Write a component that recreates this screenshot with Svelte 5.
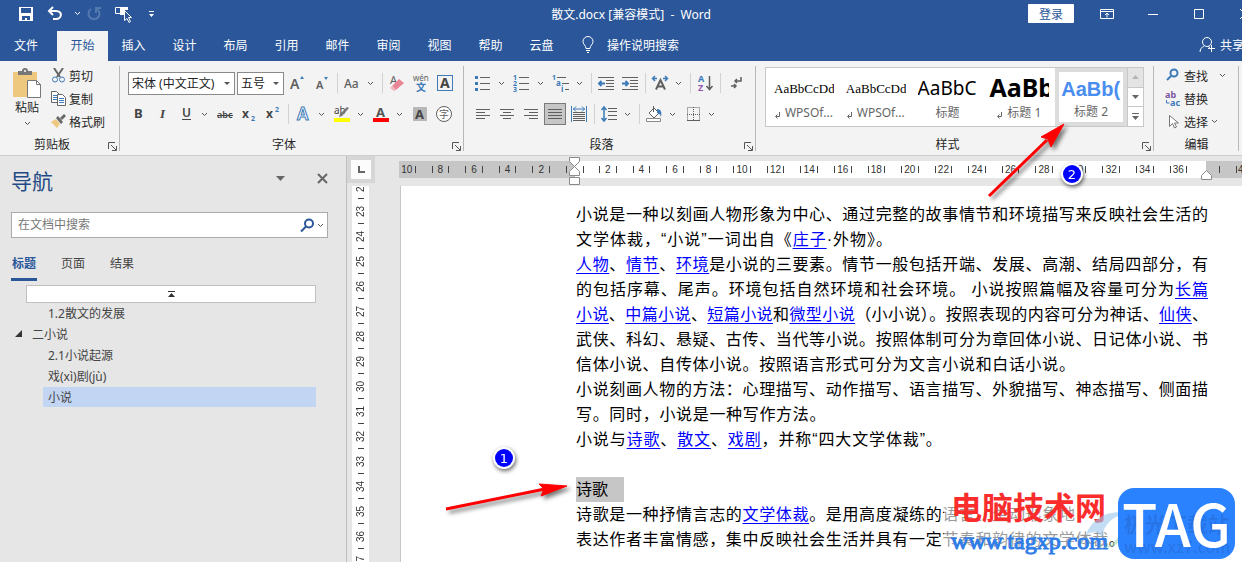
<script lang="ts">
  const BLUE = '#3d7ab8';
  const GRAY = '#5f5f5f';
  const CELLS_PER_LINE = 38;

  const tabs = ['文件', '开始', '插入', '设计', '布局', '引用', '邮件', '审阅', '视图', '帮助', '云盘'];
  let activeTab = $state('开始');

  const navTabs = ['标题', '页面', '结果'];
  let activeNavTab = $state('标题');

  const headings = [
    { text: '1.2散文的发展', level: 2 },
    { text: '二小说', level: 1, open: true },
    { text: '2.1小说起源', level: 2 },
    { text: '戏(xì)剧(jù)', level: 2 },
    { text: '小说', level: 2 },
  ];
  let selected = $state(4);

  const styles = [
    { sample: 'AaBbCcDd', name: 'WPSOf...', kind: 'body', linked: true },
    { sample: 'AaBbCcDd', name: 'WPSOf...', kind: 'body', linked: true },
    { sample: 'AaBbC', name: '标题', kind: 'title' },
    { sample: 'AaBb', name: '标题 1', kind: 'h1', linked: true },
    { sample: 'AaBb(', name: '标题 2', kind: 'h2' },
  ];

  const leftMarks = [10, 8, 6, 4, 2];
  const marks = Array.from({ length: 18 }, (_, i) => (i + 1) * 2);
  const vMarks = Array.from({ length: 16 }, (_, i) => i + 22);

  // [..] marks a hyperlink, cells is the length of the line on the character grid
  const lines = [
    { text: '小说是一种以刻画人物形象为中心、通过完整的故事情节和环境描写来反映社会生活的', cells: 38 },
    { text: '文学体裁，“小说”一词出自《[庄子]·外物》。', cells: 19 },
    { text: '[人物]、[情节]、[环境]是小说的三要素。情节一般包括开端、发展、高潮、结局四部分，有', cells: 38 },
    { text: '的包括序幕、尾声。环境包括自然环境和社会环境。  小说按照篇幅及容量可分为[长篇]', cells: 38 },
    { text: '[小说]、[中篇小说]、[短篇小说]和[微型小说]（小小说）。按照表现的内容可分为神话、[仙侠]、', cells: 38 },
    { text: '武侠、科幻、悬疑、古传、当代等小说。按照体制可分为章回体小说、日记体小说、书', cells: 38 },
    { text: '信体小说、自传体小说。按照语言形式可分为文言小说和白话小说。', cells: 30 },
    { text: '小说刻画人物的方法：心理描写、动作描写、语言描写、外貌描写、神态描写、侧面描', cells: 38 },
    { text: '写。同时，小说是一种写作方法。', cells: 15 },
    { text: '小说与[诗歌]、[散文]、[戏剧]，并称“四大文学体裁”。', cells: 22 },
    { text: '', cells: 38 },
    { text: '诗歌', cells: 38, marked: true },
    { text: '诗歌是一种抒情言志的[文学体裁]。是用高度凝练的语言、生动形象地', cells: 30 },
    { text: '表达作者丰富情感，集中反映社会生活并具有一定节奏和韵律的文学体裁。', cells: 33 },
  ];

  function parts(text: string) {
    return text.split(/\[(.+?)\]/);
  }

  function bars(rows: [number, number, number][], color = GRAY) {
    return rows.map(([x, y, w]) => `<path d="M${x} ${y + 0.5}h${w}" stroke="${color}"/>`).join('');
  }

  function glyph(text: string, x: number, y: number, size: number, color = GRAY, extra = '') {
    return `<text x="${x}" y="${y}" font-size="${size}" fill="${color}" ${extra}>${text}</text>`;
  }

  const bold = 'font-weight="700"';

  const icons: Record<string, string> = {
    grow: glyph('A', 1, 15, 14, GRAY, 'font-weight="600"') + `<path d="M11 5l2-3 2 3z" fill="${BLUE}"/>`,
    shrink: glyph('A', 3, 15, 11, GRAY, 'font-weight="600"') + `<path d="M11 3h4l-2 3z" fill="${BLUE}"/>`,
    changeCase: glyph('Aa', 1, 14, 12, GRAY, 'font-weight="500"'),
    clear: glyph('A', 2, 10, 11) + '<path d="M4 12l7-7 5 4-8 7z" fill="#e88596"/><path d="M4 12l4 4-2 1-4-3z" fill="#f2b3bd"/>',
    phonetic: glyph('wén', 1, 7, 8) + glyph('文', 4, 17, 10, BLUE, bold),
    charBorder: `<rect x="1.5" y="1.5" width="15" height="15" fill="none" stroke="${BLUE}"/>` + glyph('A', 4, 14, 14, '#444', bold),
    bold: glyph('B', 5, 13, 13, '#444', bold),
    italic: glyph('I', 7, 13, 13, '#444', 'font-style="italic" font-weight="600" font-family="Liberation Serif"'),
    underline: glyph('U', 5, 12, 12, '#444', 'font-weight="600"') + bars([[5, 14, 9]], '#444'),
    strike: glyph('abc', 1, 13, 9, '#444', 'font-weight="600"') + bars([[1, 10, 16]], '#444'),
    sub: glyph('x', 2, 13, 12, '#444', bold) + glyph('2', 11, 16, 7, BLUE, bold),
    sup: glyph('x', 2, 13, 12, '#444', bold) + glyph('2', 11, 7, 7, BLUE, bold),
    effects: glyph('A', 3, 15, 17, '#fff', `font-weight="600" stroke="${BLUE}" stroke-width="1"`),
    highlight: glyph('ab', 1, 9, 10, '#444') + '<path d="M16 3l-7 8-3 1 1-3 7-7z" fill="#777"/><path d="M1 13h16v4H1z" fill="#ffff00"/>',
    fontColor: glyph('A', 4, 12, 13, '#555', bold) + '<path d="M1 13h16v4H1z" fill="#ff0000"/>',
    charShade: '<path d="M2 2h14v14H2z" fill="#b8b8b8"/>' + glyph('A', 4, 14, 13, '#444', bold),
    enclose: `<circle cx="9" cy="9" r="7.5" fill="#fff" stroke="${GRAY}"/>` + glyph('字', 4, 13, 10),
    bullets: `<path d="M1 2h3v3H1zM1 8h3v3H1zM1 14h3v3H1z" fill="${BLUE}"/>` + bars([[6, 3, 10], [6, 9, 10], [6, 15, 10]]),
    numbers: glyph('1', 0, 6, 7, BLUE, bold) + glyph('2', 0, 12, 7, BLUE, bold) + glyph('3', 0, 18, 7, BLUE, bold) + bars([[6, 3, 10], [6, 9, 10], [6, 15, 10]]),
    multilevel: glyph('1', 0, 6, 7, BLUE, bold) + glyph('a', 4, 12, 8, BLUE, bold) + glyph('i', 9, 18, 8, BLUE, bold) + bars([[5, 3, 9], [10, 9, 7], [13, 15, 4]]),
    outdent: bars([[1, 3, 16], [9, 6, 8], [9, 9, 8], [9, 12, 8], [1, 15, 16]]) + `<path d="M8 9.500H2M4.500 7L2 9.500 4.500 12" stroke="${BLUE}" stroke-width="2" fill="none"/>`,
    indent: bars([[1, 3, 16], [9, 6, 8], [9, 9, 8], [9, 12, 8], [1, 15, 16]]) + `<path d="M1 9.500h6M4.500 7L7 9.500 4.500 12" stroke="${BLUE}" stroke-width="2" fill="none"/>`,
    asian: `<path d="M5 15.500L9.500 6 14 15.500M6.500 12.500h6" stroke="${GRAY}" stroke-width="2" fill="none"/><path d="M4 2L1.500 4.500 4 7M1.500 4.500H6M14 2l2.500 2.500L14 7M16.500 4.500H12" stroke="${BLUE}" fill="none" stroke-width="1.500"/>`,
    sort: glyph('A', 2, 8, 9, BLUE, bold) + glyph('Z', 2, 17, 9, '#9355b0', bold) + `<path d="M13.500 2v13M10.500 12l3 3.500 3-3.500" stroke="${GRAY}" fill="none" stroke-width="1.500"/>`,
    marks: `<path d="M15 3v4H9M11 5L9 7l2 2M5 12h5M8 10l2 2-2 2" stroke="${GRAY}" fill="none" stroke-width="1.500"/>`,
    left: bars([[2, 4, 14], [2, 7, 9], [2, 10, 14], [2, 13, 9]]),
    center: bars([[2, 4, 14], [5, 7, 8], [2, 10, 14], [5, 13, 8]]),
    right: bars([[2, 4, 14], [7, 7, 9], [2, 10, 14], [7, 13, 9]]),
    justify: bars([[2, 4, 14], [2, 7, 14], [2, 10, 14], [2, 13, 14]]),
    distribute: bars([[3, 7, 12], [3, 9, 12], [3, 11, 12], [3, 13, 12], [3, 15, 12]]) + `<path d="M1.500 1v16M16.500 1v16M3 4h12M6 1.500L3.500 4 6 6.500M12 1.500L14.500 4 12 6.500" stroke="${BLUE}" fill="none"/>`,
    spacing: bars([[8, 3, 9], [8, 6, 9], [8, 10, 9], [8, 14, 9]]) + `<path d="M4 2v14M1.500 5L4 2l2.500 3M1.500 13L4 16l2.500-3" stroke="${BLUE}" fill="none" stroke-width="1.500"/>`,
    shading: `<path d="M4 8l5-5 5 5-5 5z" fill="#fff" stroke="${GRAY}"/><path d="M8.500 1v6" stroke="${GRAY}"/><path d="M12 4c4 0 5 3 4 8-1-3-2-4-4-4z" fill="${BLUE}"/><path d="M1.500 13.500h14v3h-14z" fill="#fff" stroke="#888"/>`,
    borders: `<path d="M3.500 2.500h12v13h-12zM9.500 2v13M3 9.500h13" fill="none" stroke="${GRAY}" stroke-dasharray="1 1"/><path d="M3 15.500h13" stroke="${GRAY}"/>`,
  };

  const fontTop = ['grow', 'shrink', '|', 'changeCase+', '|', 'clear', 'phonetic', 'charBorder'];
  const fontBottom = ['bold', 'italic', 'underline+', 'strike', 'sub', 'sup', '|', 'effects+', 'highlight+', 'fontColor+', 'charShade', 'enclose'];
  const paraTop = ['bullets+', 'numbers+', 'multilevel+', '|', 'outdent', 'indent', '|', 'asian+', '|', 'sort', '|', 'marks'];
  const paraBottom = ['left', 'center', 'right', 'justify', 'distribute', '|', 'spacing+', '|', 'shading+', 'borders+'];
</script>

{#snippet chevron()}
  <svg class="chevron" width="7" height="5" viewBox="0 0 7 5"><path d="M1 1l2.500 2.500L6 1" /></svg>
{/snippet}

{#snippet tools(items: string[])}
  {#each items as item}
    {#if item === '|'}
      <span class="sep"></span>
    {:else}
      {@const name = item.replace('+', '')}
      <button class="tool" class:pressed={name === 'justify'} aria-label={name}>
        <svg width="18" height="18" viewBox="0 0 18 18">{@html icons[name]}</svg>
      </button>
      {#if item.endsWith('+')}
        <button class="drop" aria-label="{name} options">{@render chevron()}</button>
      {/if}
    {/if}
  {/each}
{/snippet}

{#snippet groupLabel(label: string, launcher = true)}
  <div class="group-label">
    <span>{label}</span>
    {#if launcher}
      <button class="launcher" aria-label="{label}设置">
        <svg width="9" height="9" viewBox="0 0 9 9"><path d="M.5 7V.5H7M3 3l5 5M8.500 4v4.500H4" /></svg>
      </button>
    {/if}
  </div>
{/snippet}

<div class="app">
  <header class="titlebar">
    <div class="quick">
      <button aria-label="保存">
        <svg width="16" height="16" viewBox="0 0 16 16"><path d="M1 1h14v14H1z" fill="#fff" /><path d="M3 2h10v5H3zM4 10h8v4H9v-2H7v2H4z" fill="#2b579a" /></svg>
      </button>
      <button aria-label="撤消">
        <svg width="16" height="16" viewBox="0 0 16 16"><path d="M6 1L2 5l4 4M2 5h7c7 0 6 8 0 8H6" fill="none" stroke="#fff" stroke-width="2" /></svg>
      </button>
      <button class="small" aria-label="撤消选项">{@render chevron()}</button>
      <button class="redo" aria-label="重复">
        <svg width="16" height="16" viewBox="0 0 16 16"><path d="M5 3a5.500 5.500 0 1 0 6 0M10 7V2h5" fill="none" stroke="#5478b0" stroke-width="2" /></svg>
      </button>
      <button class="touch" aria-label="触摸/鼠标模式">
        <svg width="18" height="18" viewBox="0 0 18 18"><path d="M1.500 2.500h7v6h-7z" fill="none" stroke="#fff" /><path d="M6 2h8v3h-3v5H6z" fill="#fff" /><path d="M10.500 5.500v10l2.500-2 2 4 1.500-1-2-4h3z" fill="#2b579a" stroke="#fff" /></svg>
      </button>
      <button class="small" aria-label="自定义快速访问工具栏">
        <svg width="7" height="8" viewBox="0 0 7 8"><path d="M1 1h5v1H1zM1 4h5L3.500 7z" fill="#fff" /></svg>
      </button>
    </div>
    <h1>散文.docx [兼容模式] &nbsp;-&nbsp; Word</h1>
    <div class="window-buttons">
      <button class="login">登录</button>
      <button aria-label="功能区显示选项">
        <svg width="14" height="12" viewBox="0 0 14 12"><path d="M.5 1.500h13v9H.5zM1 3.500h12M7 9.500V5M5 7l2-2 2 2" fill="none" stroke="#fff" /></svg>
      </button>
      <button aria-label="最小化"><svg width="10" height="10"><path d="M0 5.500h10" stroke="#fff" /></svg></button>
      <button aria-label="最大化"><svg width="10" height="10"><path d="M.5.5h9v9H.5z" fill="none" stroke="#fff" /></svg></button>
      <button aria-label="关闭"><svg width="10" height="10"><path d="M0 0l10 10M10 0L0 10" stroke="#fff" /></svg></button>
    </div>
  </header>

  <nav class="tabs">
    {#each tabs as tab}
      <button class="tab" class:active={tab === activeTab} onclick={() => (activeTab = tab)}>{tab}</button>
    {/each}
    <button class="tell-me">
      <svg width="14" height="18" viewBox="0 0 14 18"><path d="M5 12.500c0-3-3-4-3-7a5 5 0 0 1 10 0c0 3-3 4-3 7zM5 14.500h4M6 16.500h2" fill="none" stroke="#fff" /></svg>
      操作说明搜索
    </button>
    <button class="share">
      <svg width="17" height="17" viewBox="0 0 17 17"><circle cx="8" cy="6" r="4.500" /><path d="M1 16c0-3 2-5 4-6M9 10.500l2 1M12.500 9v7M9 12.500h7" /></svg>
      共享
    </button>
  </nav>

  <section class="ribbon">
    <div class="group clipboard">
      <div class="group-body">
        <button class="paste">
          <svg width="29" height="31" viewBox="0 0 29 31">
            <path d="M0 4h24v25H0z" fill="#edc87e" />
            <path d="M5 7V3h4a3 3 0 0 1 6 0h4v4z" fill="#777" />
            <circle cx="12" cy="3" r="1" fill="#fff" />
            <path d="M14.500 12.500h9l4 4v13h-13z" fill="#fff" stroke="#777" /><path d="M23.500 12.500v4h4" fill="none" stroke="#777" />
          </svg>
          <span>粘贴</span>
          {@render chevron()}
        </button>
        <div class="stack">
          <button>
            <svg width="15" height="15" viewBox="0 0 15 15"><path d="M3 0l6 9M12 0L6 9" stroke="#666" stroke-width="2" /><circle cx="4" cy="11.500" r="2.500" fill="none" stroke={BLUE} /><circle cx="11" cy="11.500" r="2.500" fill="none" stroke={BLUE} /></svg>
            剪切
          </button>
          <button>
            <svg width="15" height="15" viewBox="0 0 15 15"><path d="M.5.5h5l3 3v8h-8z" fill="#fff" stroke="#666" /><path d="M2 4.500h4M2 6.500h4M2 8.500h4" stroke={BLUE} /><path d="M6.500 3.500h5l3 3v8h-8z" fill="#fff" stroke="#666" /><path d="M8 7.500h5M8 9.500h5M8 11.500h5" stroke={BLUE} /></svg>
            复制
          </button>
          <button>
            <svg width="15" height="15" viewBox="0 0 15 15"><path d="M0 8l5-3 4 5-3 4z" fill="#edc87e" /><path d="M5 4l2-2 5 6-2 2zM9 4l4-4 2 2-4 4z" fill="#666" /></svg>
            格式刷
          </button>
        </div>
      </div>
      {@render groupLabel('剪贴板')}
    </div>

    <div class="group font">
      <div class="rows">
        <div class="row">
          <label class="combo wide"><select aria-label="字体"><option>宋体 (中文正文)</option></select><i></i></label>
          <label class="combo"><select aria-label="字号"><option>五号</option></select><i></i></label>
          {@render tools(fontTop)}
        </div>
        <div class="row">{@render tools(fontBottom)}</div>
      </div>
      {@render groupLabel('字体')}
    </div>

    <div class="group paragraph">
      <div class="rows">
        <div class="row">{@render tools(paraTop)}</div>
        <div class="row">{@render tools(paraBottom)}</div>
      </div>
      {@render groupLabel('段落')}
    </div>

    <div class="group styles">
      <div class="gallery">
        {#each styles as style}
          <button class="style {style.kind}">
            <span class="sample">{style.sample}</span>
            <span class="style-name">
              {#if style.linked}<svg width="5" height="7" viewBox="0 0 5 7"><path d="M4.500 0v4.500H1M2.500 2.500l-2 2 2 2" fill="none" stroke="#666" /></svg>{/if}
              {style.name}
            </span>
          </button>
        {/each}
        <div class="gallery-scroll">
          <button class="off" aria-label="上一行"><svg width="7" height="4"><path d="M0 4h7L3.500 0z" fill="#b5b5b5" /></svg></button>
          <button aria-label="下一行"><svg width="7" height="4"><path d="M0 0h7L3.500 4z" fill="#666" /></svg></button>
          <button aria-label="更多"><svg width="7" height="7"><path d="M0 0h7v1H0zM0 3h7L3.500 7z" fill="#666" /></svg></button>
        </div>
      </div>
      {@render groupLabel('样式')}
    </div>

    <div class="group editing">
      <div class="group-body">
        <div class="stack">
          <button>
            <svg width="16" height="15" viewBox="0 0 16 15"><circle cx="9" cy="5" r="3.500" fill="none" stroke={BLUE} stroke-width="2" /><path d="M6 8l-4 4" stroke={BLUE} stroke-width="2" /></svg>
            查找<span class="find-drop">{@render chevron()}</span>
          </button>
          <button>
            <svg width="16" height="16" viewBox="0 0 16 16">{@html glyph('ab', 0, 7, 9, '#7a55a0', bold) + glyph('ac', 5, 15, 9, BLUE, bold)}<path d="M1.500 9v3h3" fill="none" stroke={BLUE} /></svg>
            替换
          </button>
          <button>
            <svg width="16" height="16" viewBox="0 0 16 16"><path d="M4.500 1.500v11l3-3 2 4.500 2-1-2-4h4z" fill="#fff" stroke="#777" /></svg>
            选择 {@render chevron()}
          </button>
        </div>
      </div>
      {@render groupLabel('编辑', false)}
    </div>
  </section>

  <main class="workspace">
    <aside class="nav-pane">
      <div class="nav-head">
        <h2>导航</h2>
        <button aria-label="窗格选项"><svg width="9" height="5"><path d="M0 0h9L4.500 5z" fill="#666" /></svg></button>
        <button aria-label="关闭窗格"><svg width="11" height="11"><path d="M1 1l9 9M10 1l-9 9" stroke="#666" stroke-width="2" /></svg></button>
      </div>
      <div class="search">
        <input type="text" placeholder="在文档中搜索" aria-label="在文档中搜索" />
        <button aria-label="搜索"><svg width="15" height="15" viewBox="0 0 15 15"><circle cx="9" cy="5.500" r="4" /><path d="M6 8.500L1 13.500" /></svg></button>
        <button aria-label="搜索选项">{@render chevron()}</button>
      </div>
      <div class="nav-tabs">
        {#each navTabs as tab}
          <button class:active={tab === activeNavTab} onclick={() => (activeNavTab = tab)}>{tab}</button>
        {/each}
      </div>
      <div class="outline">
        <button class="jump" aria-label="跳转到开头"><svg width="7" height="7"><path d="M0 0h7v1H0zM0 6h7L3.500 2z" fill="#333" /></svg></button>
        {#each headings as heading, i}
          <button class="heading level-{heading.level}" class:selected={i === selected} onclick={() => (selected = i)}>
            {#if heading.open}<svg width="7" height="7"><path d="M7 0v7H0z" fill="#333" /></svg>{/if}
            {heading.text}
          </button>
        {/each}
      </div>
    </aside>

    <div class="v-side">
      <button class="corner" aria-label="制表符"><span></span></button>
      <div class="v-ruler">
        {#each vMarks as mark}
          <div class="v-cell"><span>{mark}</span></div>
        {/each}
      </div>
    </div>

    <div class="document">
      <div class="ruler">
        <div class="margin left"><div class="cells">{#each leftMarks as mark}<span class="cell">{mark}</span>{/each}</div><span class="last"></span></div>
        <div class="measure">
          <svg class="indent-mark" width="11" height="28" viewBox="0 0 11 28"><path d="M.5.5h10v4l-5 5-5-5zM.5 18.500v-4l5-5 5 5v4zM.5 20.500h10v7H.5z" /></svg>
          <span class="first"></span>
          <div class="cells">{#each marks as mark}<span class="cell">{mark}</span>{/each}</div>
          <svg class="right-mark" width="11" height="10" viewBox="0 0 11 10"><path d="M.5 9.500v-4l5-5 5 5v4z" /></svg>
        </div>
        <div class="margin right"><span class="cell"></span><span>4</span></div>
      </div>
      <article class="page">
        {#each lines as line}
          <p style="width: {(line.cells / CELLS_PER_LINE) * 100}%" class:plain={line.marked}>
            {#if line.marked}<mark>{line.text}</mark>{:else}{#each parts(line.text) as part, i}{#if i % 2}<a href="#{part}">{part}</a>{:else}{part}{/if}{/each}{/if}
          </p>
        {/each}
      </article>
    </div>
  </main>

  <svg class="notes" width="1242" height="562" viewBox="0 0 1242 562">
    <g class="arrow">
      <path d="M446 509L545 489" stroke-width="3" />
      <path d="M567 486l-28-2 5 5-3 7z" />
      <path d="M989 196l58-56" stroke-width="3" />
      <path d="M1064 124l-23 13 7 2 3 8z" />
    </g>
    {#each [{ n: 1, x: 504, y: 458 }, { n: 2, x: 1072, y: 174 }] as note}
      <g class="badge">
        <circle cx={note.x} cy={note.y} r="11" fill="#fff" />
        <circle cx={note.x} cy={note.y} r="9" fill="#0000ff" />
        <text x={note.x} y={note.y + 5} text-anchor="middle">{note.n}</text>
      </g>
    {/each}
  </svg>

  <div class="stamp">
    <div class="stamp-text">
      <strong>电脑技术网</strong>
      <span>www.tagxp.com</span>
    </div>
    <svg class="swirl" width="50" height="42" viewBox="0 0 50 42">
      <path d="M2 26C8 8 26 0 46 4 28 6 20 16 18 28c-4-6-10-6-16-2z" fill="#9cc9ee" />
      <path d="M12 38c14 2 24-6 24-20 6 12-4 24-24 20z" fill="#a9d8a8" />
    </svg>
    <div class="logo">
      TAG
      <div class="faint"><b>极光下载站</b><span>www.xz7.com</span></div>
    </div>
  </div>
</div>

<style>
  :global(body) { margin: 0; }

  .app {
    position: relative;
    display: flex;
    flex-direction: column;
    height: 100vh;
    overflow: hidden;
    background: #e6e6e6;
    color: #262626;
    font: 12px "Noto Sans", "Noto Sans CJK SC", sans-serif;
  }

  button {
    display: flex;
    align-items: center;
    justify-content: center;
    padding: 0;
    border: 0;
    background: none;
    color: inherit;
    font: inherit;
    white-space: nowrap;
  }

  svg { flex-shrink: 0; }
  .chevron path { fill: none; stroke: #555; }

  .titlebar {
    display: grid;
    grid-template-columns: 234px 1fr 214px;
    align-items: center;
    height: 27px;
    flex-shrink: 0;
    background: #2b579a;
    color: #fff;
  }
  .titlebar h1 { margin: 0; font-size: 12px; font-weight: 400; text-align: center; }
  .quick { display: flex; align-items: center; padding-left: 14px; }
  .quick button { width: 24px; height: 24px; margin-right: 5px; }
  .quick button.small { width: 10px; margin-right: 0; }
  .quick button.redo { margin-right: 5px; }
  .quick button.touch { margin-right: 11px; }
  .quick .chevron path { stroke: #fff; }

  .window-buttons { display: flex; align-items: center; overflow: hidden; }
  .window-buttons button { width: 46px; flex-shrink: 0; height: 19px; }
  .window-buttons .login { margin-right: 10px; border-radius: 1px; background: #fff; color: #2b579a; }

  .tabs {
    display: flex;
    height: 34px;
    flex-shrink: 0;
    align-items: flex-end;
    overflow: hidden;
    background: #2b579a;
    color: #fff;
  }
  .tab { width: 51px; height: 30px; padding-bottom: 3px; }
  .tab:first-child { width: 57px; padding-right: 5px; }
  .tab.active { background: #f3f3f3; color: #2b579a; }
  .tell-me, .share { height: 30px; gap: 12px; padding: 0 0 3px 14px; }
  .share { gap: 4px; margin: 0 -2px 0 auto; }
  .share svg { fill: none; stroke: #fff; }

  .ribbon {
    display: flex;
    height: 94px;
    flex-shrink: 0;
    border-bottom: 1px solid #cfcfcf;
    background: #f3f3f3;
  }
  .group {
    position: relative;
    display: flex;
    flex-direction: column;
    justify-content: space-between;
    box-sizing: border-box;
    padding: 0 0 2px;
  }
  .group::after {
    content: '';
    position: absolute;
    inset: 5px 0 4px auto;
    width: 1px;
    background: #b8b8b8;
  }
  .clipboard { width: 120px; }
  .font { width: 344px; padding-left: 8px; }
  .paragraph { width: 292px; padding-left: 7px; }
  .styles { flex: 1; min-width: 0; padding-left: 9px; }
  .editing { width: 85px; margin-right: 3px; }

  .group-label { display: flex; align-items: center; height: 18px; }
  .group-label span { flex: 1; text-align: center; }
  .font .group-label, .paragraph .group-label, .styles .group-label { margin-left: -8px; }
  .launcher { width: 16px; height: 16px; padding-top: 4px; }
  .launcher path { fill: none; stroke: #555; }

  .group-body { display: flex; padding-top: 3px; }
  .paste { flex-direction: column; justify-content: flex-start; width: 28px; margin: 4px 10px 0 13px; }
  .paste span { line-height: 18px; }
  .paste .chevron { margin-top: 4px; }
  .stack { display: flex; flex-direction: column; }
  .stack button { justify-content: flex-start; gap: 3px; height: 23px; }
  .editing .stack { padding-left: 11px; }
  .find-drop { display: flex; padding-left: 8px; }

  .rows { display: flex; flex-direction: column; gap: 9px; padding-top: 11px; }
  .row { display: flex; align-items: center; height: 22px; }
  .font .row + .row { margin-left: -2px; }
  .tool { width: 24px; height: 22px; flex-shrink: 0; }
  .tool.pressed { box-sizing: border-box; width: 22px; margin: 0 1px; border: 1px solid #7a7a7a; background: #c6c6c6; }
  .drop { width: 12px; height: 22px; margin-right: 3px; flex-shrink: 0; }
  .sep { width: 1px; height: 20px; margin: 0 2px 0 3px; background: #d2d2d2; }

  .combo {
    position: relative;
    display: flex;
    box-sizing: border-box;
    width: 47px;
    height: 23px;
    margin-right: 2px;
    border: 1px solid #8a8a8a;
    background: #fff;
  }
  .combo.wide { width: 107px; }
  .combo select {
    width: 100%;
    padding: 0 0 0 3px;
    border: 0;
    appearance: none;
    background: none;
    color: #222;
    font: inherit;
  }
  .combo i {
    position: absolute;
    right: 4px;
    top: 9px;
    border: 3px solid transparent;
    border-top-color: #555;
  }

  .gallery {
    display: flex;
    box-sizing: border-box;
    height: 60px;
    margin: 6px 10px 0 0;
    padding-left: 2px;
    border: 1px solid #c8c8c8;
    background: #fff;
  }
  .style {
    box-sizing: border-box;
    flex-direction: column;
    flex: 1;
    min-width: 0;
    margin: 0;
    padding: 0 6px;
    overflow: hidden;
  }
  .sample { display: block; width: 100%; height: 32px; overflow: hidden; line-height: 34px; color: #000; text-align: left; }
  .style-name { display: flex; align-items: center; gap: 5px; line-height: 20px; color: #666; }
  .style-name svg { margin-top: 4px; }
  .body .sample { font: 13px/36px "Liberation Serif", serif; }
  .title .sample { font-size: 19px; }
  .h1 .sample { font: 700 25px/32px "Noto Sans", sans-serif; }
  .h2 { border: 4px solid #dcdcdc; padding: 0 2px; }
  .h2 .sample { font: 700 20px/34px "Liberation Sans", sans-serif; color: #4a8df0; }
  .gallery-scroll { display: flex; flex-direction: column; width: 15px; border-left: 1px solid #c8c8c8; }
  .gallery-scroll button { flex: 1; }
  .gallery-scroll button + button { border-top: 1px solid #c8c8c8; }
  .gallery-scroll .off { background: #e4e4e4; }

  .workspace { display: flex; flex: 1; min-height: 0; }

  .nav-pane {
    box-sizing: border-box;
    width: 347px;
    flex-shrink: 0;
    padding: 9px 18px 0 11px;
    border-right: 1px solid #c0c0c0;
    color: #444;
  }
  .nav-head { display: flex; align-items: center; gap: 32px; height: 30px; }
  .nav-head h2 { flex: 1; margin: 0; font-size: 21px; font-weight: 400; color: #1f4a85; }
  .nav-head button { height: 30px; padding-bottom: 4px; }
  .search {
    display: flex;
    box-sizing: border-box;
    height: 26px;
    margin-top: 17px;
    padding-right: 2px;
    border: 1px solid #ababab;
    background: #fff;
  }
  .search input { flex: 1; min-width: 0; padding: 0 6px 2px; border: 0; background: none; font: inherit; }
  .search input::placeholder { color: #777; }
  .search button { padding: 0 1px; }
  .search button svg:not(.chevron) { fill: none; stroke: #2b579a; stroke-width: 2; }

  .nav-tabs { display: flex; gap: 23px; margin-top: 12px; }
  .nav-tabs button { height: 31px; padding: 0 1px 2px; border-bottom: 3px solid transparent; box-sizing: border-box; }
  .nav-tabs .active { border-color: #2b579a; color: #2b579a; font-weight: 700; }

  .outline { display: flex; flex-direction: column; padding: 4px 12px 0 4px; }
  .jump { height: 18px; margin-left: 11px; border: 1px solid #c0c0c0; background: #fff; box-sizing: border-box; }
  .heading { height: 20px; padding-bottom: 1px; margin-bottom: 1px; justify-content: flex-start; }
  .heading.level-1 { gap: 10px; }
  .heading.level-2 { margin-left: 28px; padding-left: 5px; }
  .heading.selected { background: #c2d5f2; }

  .v-side { display: flex; flex-direction: column; width: 52px; flex-shrink: 0; }
  .corner { width: 28px; height: 27px; margin-bottom: 3px; flex-shrink: 0; background: #fcfcfc; border: 4px solid #d6d6d6; box-sizing: border-box; }
  .corner span { width: 5px; height: 5px; border: solid #666; border-width: 0 0 2px 2px; }
  .v-ruler { flex: 1; min-height: 0; width: 17px; margin-left: 5px; overflow: hidden; background: #fff; font: 10px "Liberation Sans", sans-serif; color: #333; }
  .v-cell { display: flex; flex-direction: column; align-items: center; height: 25px; gap: 6px; }
  .v-cell span { height: 12px; writing-mode: vertical-rl; rotate: 180deg; }
  .v-cell:first-child { height: 19px; }
  .v-cell:first-child span { height: 6px; }
  .v-cell::after { content: ''; width: 6px; height: 1px; background: #444; }

  .document { display: flex; flex-direction: column; flex: 1; min-width: 0; }
  .ruler {
    display: flex;
    height: 17px;
    margin: 5px 0 8px;
    flex-shrink: 0;
    font: 10px "Liberation Sans", sans-serif;
    color: #333;
  }
  .margin { display: flex; align-items: center; overflow: hidden; background: #c6c6c6; }
  .margin.left { width: 176px; justify-content: flex-end; }
  .margin.right { width: 36px; }
  .margin.right .cell { flex: 0 0 31px; margin-right: 1px; padding: 0 0 0 13px; }
  .margin.left .cells { width: 168px; flex-shrink: 0; }
  .margin .last { width: 17px; flex-shrink: 0; height: 7px; background: linear-gradient(#444, #444) 8px 0 / 1px 7px no-repeat; }
  .measure { position: relative; display: flex; align-items: center; flex: 1; min-width: 0; background: #fff; }
  .measure .cells { flex: 1; margin-right: 11px; }
  .first { width: 16px; height: 7px; background: linear-gradient(#444, #444) 8px 0 / 1px 7px no-repeat; }
  .cells { display: flex; }
  .cell { display: flex; flex: 1; align-items: center; justify-content: space-between; box-sizing: border-box; padding: 0 8px; }
  .cell::before, .cell::after { content: ''; width: 1px; height: 7px; background: #444; }
  .indent-mark, .right-mark { position: absolute; left: -6px; top: -4px; fill: #fff; stroke: #8a8a8a; }
  .right-mark { left: auto; right: -6px; top: 9px; }

  .page {
    flex: 1;
    margin-left: 1px;
    padding: 16px 34px 0 175px;
    border-left: 1px solid #c6c6c6;
    background: #fff;
    color: #000;
    font: 16px/25px "Liberation Sans", "Noto Sans CJK SC", sans-serif;
  }
  .page p { height: 25px; margin: 0; white-space: nowrap; text-align: justify; text-align-last: justify; }
  .page p.plain { text-align-last: left; }
  .page a { color: #0000ff; text-underline-offset: 3px; }
  .page mark { display: inline-block; padding-right: 16px; background: #c6c6c6; color: inherit; }

  .notes { position: absolute; left: 0; top: 0; pointer-events: none; }
  .arrow { fill: #f00; stroke: #f00; filter: drop-shadow(3px 3px 2px #0008); }
  .badge { filter: drop-shadow(1px 2px 2px #0009); }
  .badge text { fill: #fff; font: 13px "DejaVu Sans", sans-serif; }

  .stamp {
    position: absolute;
    right: 7px;
    bottom: 3px;
    display: flex;
    align-items: center;
    height: 71px;
  }
  .stamp-text { display: flex; flex-direction: column; padding-left: 7px; background: linear-gradient(#fff9, #fff9) 0 10px no-repeat; }
  .stamp strong { font-size: 31px; line-height: 35px; color: #fb2c2c; }
  .stamp-text span { font: 24px/32px "Liberation Serif", serif; color: #2f7de8; -webkit-text-stroke: 1px #2f7de8; }
  .swirl { margin: 12px -16px 0 -24px; opacity: 0.6; }
  .logo {
    position: relative;
    isolation: isolate;
    width: 117px;
    height: 71px;
    border-radius: 16px;
    background: #2b82ff;
    color: #fff;
    font: 500 58px/68px "Noto Sans CJK SC", sans-serif;
    text-align: center;
  }
  .faint {
    position: absolute;
    z-index: -1;
    inset: 22px 0 0 6px;
    display: flex;
    flex-direction: column;
    font-size: 21px;
    line-height: 26px;
    color: #1c4c9c;
    opacity: 0.25;
    text-align: left;
  }
  .faint span { font-size: 16px; line-height: 20px; }
</style>
